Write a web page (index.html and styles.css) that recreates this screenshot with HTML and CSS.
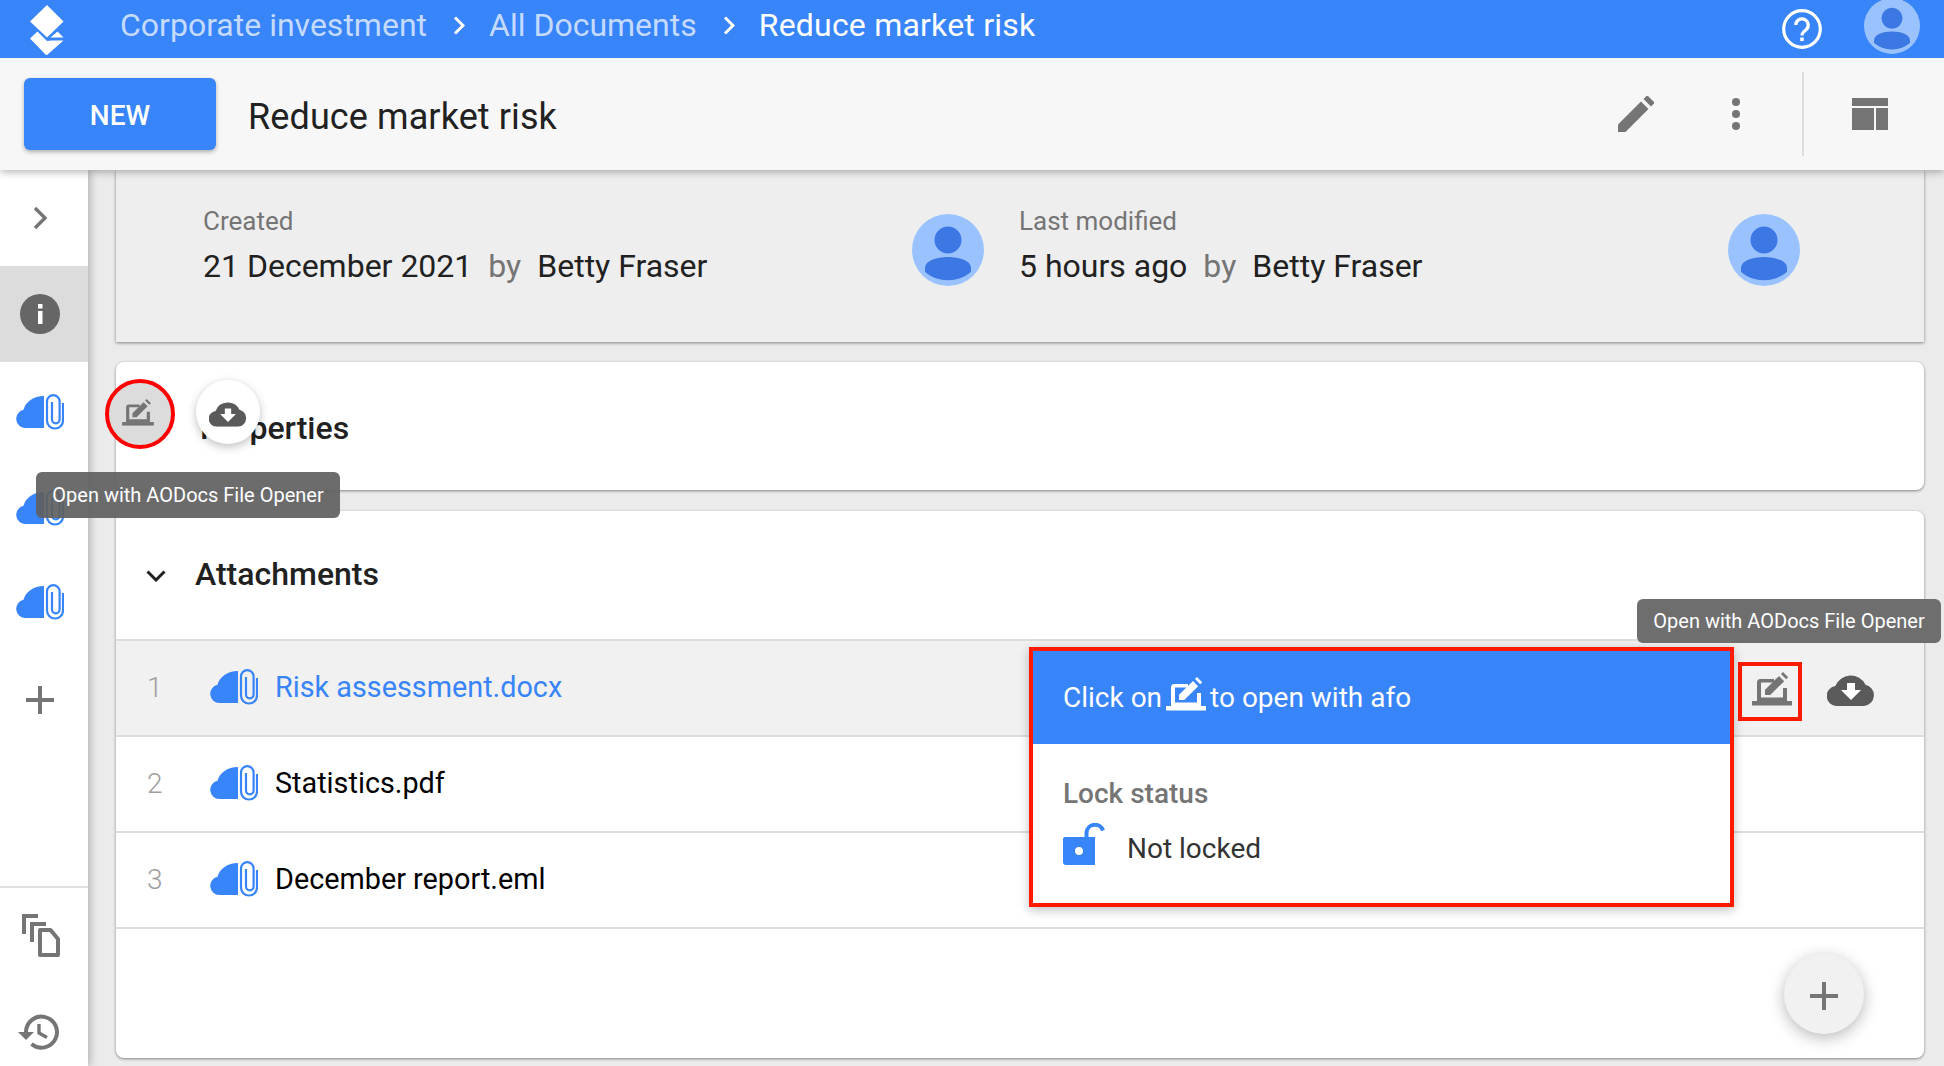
FILE: index.html
```html
<!DOCTYPE html>
<html lang="en">
<head>
<meta charset="utf-8">
<title>Reduce market risk</title>
<link rel="stylesheet" href="styles.css">
</head>
<body>
<svg class="defs" width="0" height="0" aria-hidden="true">
  <symbol id="cloudclip" viewBox="0 0 48 36">
    <path d="M28 2V34H9.500A9.200 9.200 0 0 1 7.500 15.800C9.500 7.800 17.500 2 28 2Z" fill="#3884f9"/>
    <path d="M36 8V25.500A3.800 3.800 0 0 0 43.600 25.500V7.500A6.300 6.300 0 0 0 31 7.500V26.500A8 8 0 0 0 47 26.500V9" fill="none" stroke="#3884f9" stroke-width="2.200"/>
  </symbol>
  <symbol id="avatar" viewBox="0 0 72 72">
    <circle cx="36" cy="36" r="36" fill="#9ac2ff"/>
    <circle cx="36" cy="26" r="13.500" fill="#3b78e3"/>
    <path d="M13 58V54C13 47 24 43 36 43S59 47 59 54V58A36 36 0 0 1 13 58Z" fill="#3b78e3"/>
  </symbol>
  <symbol id="opener" viewBox="0 0 40 34">
    <path d="M5 29V10.500Q5 7 8.500 7H22V10.500H9V25.500H31V16H35V29Z" fill="currentColor"/>
    <path d="M0 29H40V33.500H0Z" fill="currentColor"/>
    <path d="M13 23V17.800L27 4L32.200 9.200L18.200 23ZM29 2L31 0L36.200 5.200L34.200 7.200Z" fill="currentColor"/>
  </symbol>
  <symbol id="dlcloud" viewBox="0 0 48 32">
    <path d="M10 32A10 10 0 0 1 8.300 12.100A16.500 16.500 0 0 1 38.500 10.700A10.800 10.800 0 0 1 37 32Z" fill="currentColor"/>
    <path d="M20 9H28V16H34L24 26L14 16H20Z" fill="#fff"/>
  </symbol>
</svg>

<div class="page">
  <header class="topbar">
    <svg class="logo" viewBox="0 0 34 50" aria-hidden="true">
      <path d="M17 0L33.500 16.500L17 32.500L0 16.500Z" fill="#fff"/>
      <path d="M7.500 26.500L17 36L21.500 35.500H33.500L16.500 50.500L0 33.500Z" fill="#fff"/>
      <path d="M27.500 26.500L33.500 32.500H20.500Z" fill="#fff"/>
    </svg>
    <nav class="crumbs">
      <span class="crumb">Corporate investment</span>
      <svg class="crumb-sep" viewBox="0 0 12 19" aria-hidden="true"><path d="M2 1.500L10 9.500L2 17.500" fill="none" stroke="#fff" stroke-width="3"/></svg>
      <span class="crumb">All Documents</span>
      <svg class="crumb-sep" viewBox="0 0 12 19" aria-hidden="true"><path d="M2 1.500L10 9.500L2 17.500" fill="none" stroke="#fff" stroke-width="3"/></svg>
      <span class="crumb crumb-current">Reduce market risk</span>
    </nav>
    <svg class="help" viewBox="0 0 40 40" aria-hidden="true">
      <circle cx="20" cy="20" r="18.300" fill="none" stroke="#fff" stroke-width="3.200"/>
      <path d="M13.800 16A6.200 6.200 0 1 1 23.500 21.200C21 23 20 24 20 26.500" fill="none" stroke="#fff" stroke-width="3.200"/>
      <rect x="18.200" y="28.500" width="3.600" height="3.600" fill="#fff"/>
    </svg>
    <svg class="top-avatar" viewBox="0 0 72 72" aria-hidden="true"><use href="#avatar"/></svg>
  </header>

  <div class="toolbar">
    <button class="new-btn" type="button">NEW</button>
    <h1 class="doc-title">Reduce market risk</h1>
    <svg class="pencil" viewBox="0 0 36 36" aria-hidden="true"><path d="M0 28.500L23 5.500L30.500 13L7.500 36H0Z" fill="#757575"/><path d="M25.500 3L28.500 0H30L36 6V7.500L33 10.500Z" fill="#757575"/></svg>
    <div class="dots"><i></i><i></i><i></i></div>
    <div class="tool-sep"></div>
    <div class="layout-icon"><i class="li-top"></i><i class="li-left"></i><i class="li-right"></i></div>
  </div>

  <div class="main">
    <aside class="sidebar">
      <div class="side-cell">
        <svg class="side-chev" viewBox="0 0 16 24" aria-hidden="true"><path d="M3 2L13 12L3 22" fill="none" stroke="#757575" stroke-width="3.400"/></svg>
      </div>
      <div class="side-cell side-active">
        <svg class="info-icon" viewBox="0 0 40 40" aria-hidden="true"><circle cx="20" cy="20" r="20" fill="#666"/><rect x="18" y="17" width="4.500" height="13" fill="#fff"/><rect x="18" y="10" width="4.500" height="4.500" fill="#fff"/></svg>
      </div>
      <div class="side-cell side-tall"><svg class="cc" viewBox="0 0 48 36" aria-hidden="true"><use href="#cloudclip"/></svg></div>
      <div class="side-cell side-short"><svg class="cc" viewBox="0 0 48 36" aria-hidden="true"><use href="#cloudclip"/></svg></div>
      <div class="side-cell"><svg class="cc" viewBox="0 0 48 36" aria-hidden="true"><use href="#cloudclip"/></svg></div>
      <div class="side-cell side-tall"><div class="plus plus-side"></div></div>
      <div class="side-bottom">
        <svg class="side-copy" viewBox="0 0 38 44" aria-hidden="true">
          <path d="M0 20V0H16V4H4V20ZM8 28V8H24V12H12V28Z" fill="#757575"/>
          <path d="M18 16H28.500L36 25V41H18Z" fill="none" stroke="#757575" stroke-width="4" stroke-linejoin="round"/>
        </svg>
        <svg class="side-history" viewBox="0 0 42 36" aria-hidden="true">
          <path d="M8 18A15.500 15.500 0 1 1 13.500 30" fill="none" stroke="#757575" stroke-width="4"/>
          <path d="M0 18H16L8 26Z" fill="#757575"/>
          <path d="M21 10V19L29 23.500" fill="none" stroke="#757575" stroke-width="3.400"/>
        </svg>
      </div>
    </aside>

    <main class="content">
      <section class="info-panel">
        <div class="info-block">
          <div class="info-text">
            <div class="info-label">Created</div>
            <div class="info-value">21 December 2021<span class="by">by</span>Betty Fraser</div>
          </div>
          <svg class="info-avatar" viewBox="0 0 72 72" aria-hidden="true"><use href="#avatar"/></svg>
        </div>
        <div class="info-block">
          <div class="info-text">
            <div class="info-label">Last modified</div>
            <div class="info-value">5 hours ago<span class="by">by</span>Betty Fraser</div>
          </div>
          <svg class="info-avatar" viewBox="0 0 72 72" aria-hidden="true"><use href="#avatar"/></svg>
        </div>
      </section>

      <section class="card card-props">
        <h2 class="card-title props-title">Properties</h2>
      </section>

      <section class="card card-attach">
        <div class="attach-head">
          <svg class="attach-chev" viewBox="0 0 20 12" aria-hidden="true"><path d="M1.500 1.500L10 10L18.500 1.500" fill="none" stroke="#212121" stroke-width="3"/></svg>
          <h2 class="card-title">Attachments</h2>
        </div>
        <div class="row row-hover">
          <span class="row-num">1</span>
          <svg class="cc" viewBox="0 0 48 36" aria-hidden="true"><use href="#cloudclip"/></svg>
          <span class="row-name row-link">Risk assessment.docx</span>
        </div>
        <div class="row">
          <span class="row-num">2</span>
          <svg class="cc" viewBox="0 0 48 36" aria-hidden="true"><use href="#cloudclip"/></svg>
          <span class="row-name">Statistics.pdf</span>
        </div>
        <div class="row row-last">
          <span class="row-num">3</span>
          <svg class="cc" viewBox="0 0 48 36" aria-hidden="true"><use href="#cloudclip"/></svg>
          <span class="row-name">December report.eml</span>
        </div>
      </section>
    </main>
  </div>

  <!-- overlays -->
  <div class="circle-open"><svg class="opener-sm" viewBox="0 0 40 34" aria-hidden="true"><use href="#opener"/></svg></div>
  <div class="circle-dl"><svg class="dl-sm" viewBox="0 0 48 32" aria-hidden="true"><use href="#dlcloud"/></svg></div>
  <div class="tooltip tooltip-left">Open with AODocs File Opener</div>
  <div class="tooltip tooltip-right">Open with AODocs File Opener</div>
  <div class="red-box"><svg class="opener-row" viewBox="0 0 40 34" aria-hidden="true"><use href="#opener"/></svg></div>
  <svg class="dl-row" viewBox="0 0 48 32" aria-hidden="true"><use href="#dlcloud"/></svg>
  <div class="callout">
    <div class="callout-head">Click on<svg class="opener-white" viewBox="0 0 40 34" aria-hidden="true"><use href="#opener"/></svg>to open with afo</div>
    <div class="callout-body">
      <div class="lock-label">Lock status</div>
      <div class="lock-row">
        <svg class="lock" viewBox="0 0 42 42" aria-hidden="true">
          <path d="M2 14H32V42H3Q0 42 0 39V16Q0 14 2 14Z" fill="#3884f9" />
          <path d="M23.500 14V9.500A8.500 8.500 0 0 1 40 7.500" fill="none" stroke="#3884f9" stroke-width="4"/>
          <circle cx="16" cy="28" r="4" fill="#fff"/>
        </svg>
        <span class="lock-text">Not locked</span>
      </div>
    </div>
  </div>
  <div class="fab"><div class="plus plus-fab"></div></div>
</div>
</body>
</html>
```

FILE: styles.css
```css
* { box-sizing: border-box; }
html, body { margin: 0; padding: 0; height: 100%; overflow: hidden; }
body { font-family: Roboto, "Liberation Sans", sans-serif; color: #212121; background: #ebebeb; }
.defs { position: absolute; }
.page { position: relative; width: 1944px; height: 1066px; display: flex; flex-direction: column; overflow: hidden; }

.topbar { height: 58px; background: #3884f9; display: flex; align-items: center; flex: none; position: relative; z-index: 3; }
.logo { width: 34px; height: 50px; margin-left: 30px; margin-top: 2px; flex: none; }
.crumbs { display: flex; align-items: center; margin-left: 56px; font-size: 32px; color: #fff; flex: 1; padding-bottom: 8px; }
.crumb { color: #c4dbff; white-space: nowrap; }
.crumb-current { color: #fff; letter-spacing: .2px; }
.crumb-sep { width: 12px; height: 19px; margin: 0 24px 0 26px; flex: none; }
.help { width: 40px; height: 40px; margin-right: 42px; flex: none; }
.top-avatar { width: 56px; height: 56px; margin-right: 24px; margin-top: -6px; flex: none; }

.toolbar { height: 112px; background: #f7f7f7; display: flex; align-items: center; padding-left: 24px; flex: none; position: relative; z-index: 2; box-shadow: 0 2px 8px rgba(0,0,0,.3); }
.new-btn { width: 192px; height: 72px; border: 0; border-radius: 6px; padding-top: 4px; background: #3884f9; color: #fff; font: 500 28px Roboto, sans-serif; box-shadow: 0 2px 4px rgba(0,0,0,.3); }
.doc-title { margin: 0 0 0 32px; padding-top: 5px; font-weight: 400; font-size: 36px; letter-spacing: .1px; flex: 1; }
.pencil { width: 36px; height: 36px; margin-right: 78px; flex: none; }
.dots { display: flex; flex-direction: column; gap: 4px; margin-right: 62px; flex: none; }
.dots i { display: block; width: 8px; height: 8px; border-radius: 50%; background: #757575; }
.tool-sep { width: 2px; height: 84px; background: #ddd; margin-right: 48px; flex: none; }
.layout-icon { width: 36px; height: 32px; display: grid; grid-template-columns: 22px 12px; grid-template-rows: 8px 22px; gap: 2px; margin-right: 56px; flex: none; }
.layout-icon i { background: #757575; }
.li-top { grid-column: 1 / 3; }

.main { flex: 1; display: flex; min-height: 0; }
.sidebar { width: 88px; background: #fff; flex: none; display: flex; flex-direction: column; box-shadow: 2px 0 8px rgba(0,0,0,.25); position: relative; z-index: 1; }
.side-cell { height: 96px; display: flex; align-items: center; justify-content: center; padding-right: 8px; flex: none; }
.side-tall { height: 100px; }
.side-short { height: 92px; }
.side-active { background: #dcdcdc; }
.side-chev { width: 16px; height: 24px; }
.info-icon { width: 40px; height: 40px; }
.cc { width: 48px; height: 36px; flex: none; }
.plus { position: relative; }
.plus::before, .plus::after { content: ""; position: absolute; background: #757575; }
.plus-side, .plus-fab { width: 28px; height: 28px; }
.plus-fab { margin-top: 4px; }
.plus::before { left: 0; right: 0; top: 12px; height: 4px; }
.plus::after { top: 0; bottom: 0; left: 12px; width: 4px; }
.side-bottom { margin-top: auto; height: 180px; border-top: 2px solid #e0e0e0; display: flex; flex-direction: column; align-items: center; padding: 26px 6px 0 0; gap: 56px; }
.side-copy { width: 38px; height: 44px; }
.side-history { width: 42px; height: 36px; margin-right: 4px; }

.content { flex: 1; padding: 0 20px 8px 28px; display: flex; flex-direction: column; min-width: 0; }
.info-panel { height: 172px; flex: none; background: #eee; box-shadow: 0 1px 3px rgba(0,0,0,.45); display: grid; grid-template-columns: 816px 1fr; padding-left: 87px; padding-right: 124px; }
.info-block { display: flex; align-items: flex-start; justify-content: space-between; padding-top: 36px; }
.info-block:first-child { padding-right: 35px; }
.info-label { font-size: 26px; line-height: 30px; color: #757575; }
.info-value { font-size: 32px; line-height: 38px; margin-top: 11px; white-space: nowrap; }
.by { color: #757575; margin: 0 16px 0 16px; }
.info-avatar { width: 72px; height: 72px; margin-top: 8px; flex: none; }

.card { background: #fff; border-radius: 8px; box-shadow: 0 1px 3px rgba(0,0,0,.45); }
.card-props { height: 128px; margin-top: 20px; flex: none; display: flex; align-items: center; padding: 3px 0 0 84px; }
.card-title { margin: 0; font-size: 32px; font-weight: 500; color: #212121; }
.card-attach { margin-top: 21px; height: 547px; flex: none; overflow: hidden; }
.attach-head { height: 128px; display: flex; align-items: center; padding: 0 0 2px 30px; gap: 29px; }
.attach-chev { width: 20px; height: 12px; margin-top: 4px; }
.row { height: 96px; display: flex; align-items: center; padding-left: 31px; border-top: 2px solid #ddd; padding-bottom: 2px; font-size: 28.8px; color: #000; }
.row-last { height: 98px; border-bottom: 2px solid #ddd; }
.row-hover { background: #f1f1f1; }
.row-num { width: 63px; font-size: 28px; font-weight: 300; color: #9e9e9e; }
.row-name { margin-left: 17px; }
.row-link { color: #3884f9; }

.tooltip { position: absolute; background: rgba(96,96,96,.92); color: #fff; border-radius: 6px; font-size: 20px; display: flex; align-items: center; justify-content: center; z-index: 6; white-space: nowrap; }
.tooltip-left { left: 36px; top: 472px; width: 304px; height: 46px; }
.tooltip-right { left: 1637px; top: 599px; width: 304px; height: 44px; background: #6e6e6e; }
.circle-open { position: absolute; left: 105px; top: 379px; width: 70px; height: 70px; border-radius: 50%; background: #dcdcdc; border: 4px solid #f00; display: flex; align-items: center; justify-content: center; padding: 0 4px 4px 0; z-index: 5; }
.opener-sm { width: 32px; height: 27px; color: #757575; }
.circle-dl { position: absolute; left: 196px; top: 380px; width: 64px; height: 64px; border-radius: 50%; background: #fff; box-shadow: 0 3px 10px rgba(0,0,0,.25); display: flex; align-items: center; justify-content: center; padding-top: 4px; z-index: 5; }
.dl-sm { width: 38px; height: 26px; color: #5a5a5a; }
.red-box { position: absolute; left: 1738px; top: 662px; width: 64px; height: 59px; border: 4px solid #ff1a00; display: flex; align-items: center; justify-content: center; padding: 0 0 6px 4px; z-index: 5; }
.opener-row { width: 40px; height: 34px; color: #757575; flex: none; }
.dl-row { position: absolute; left: 1827px; top: 674px; width: 48px; height: 32px; color: #5a5a5a; z-index: 5; }
.callout { position: absolute; left: 1029px; top: 647px; width: 705px; height: 260px; border: 4px solid #ff1a00; background: #fff; z-index: 5; box-shadow: 0 3px 10px rgba(0,0,0,.25); }
.callout-head { height: 93px; background: #3884f9; color: #fff; font-size: 28px; display: flex; align-items: center; padding-left: 30px; }
.opener-white { width: 40px; height: 34px; color: #fff; margin: -8px 4px 0 4px; }
.callout-body { padding: 34px 0 0 30px; }
.lock-label { font-size: 28px; font-weight: 500; color: #757575; line-height: 32px; }
.lock-row { display: flex; align-items: center; margin-top: 17px; font-size: 28px; color: #333; gap: 22px; }
.lock { width: 42px; height: 42px; margin-top: -5px; }
.lock-text { padding-top: 5px; }
.fab { position: absolute; left: 1784px; top: 954px; width: 80px; height: 80px; border-radius: 50%; background: #f1f1f1; box-shadow: 0 4px 16px rgba(0,0,0,.28); display: flex; align-items: center; justify-content: center; z-index: 4; }
```
